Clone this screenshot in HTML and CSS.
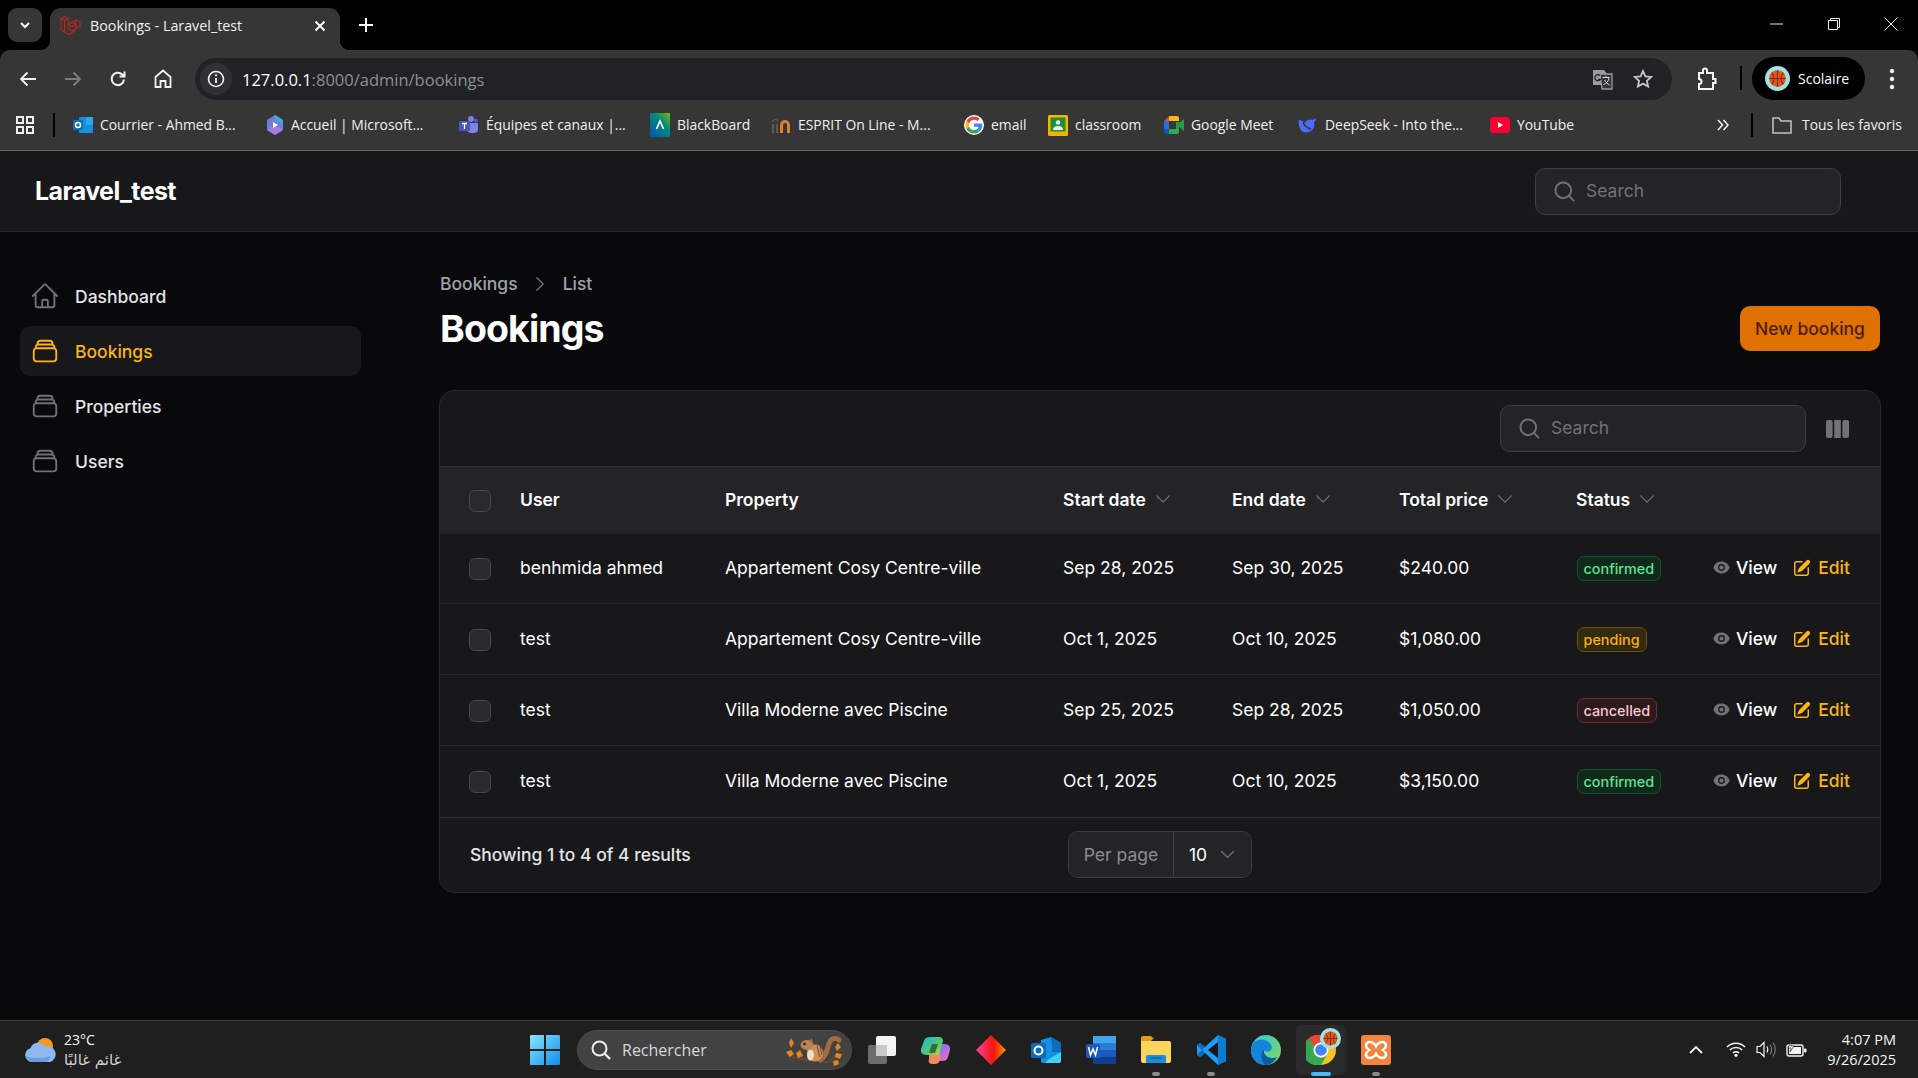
FILE: index.html
```html
<!DOCTYPE html>
<html lang="en">
<head>
    <meta charset="UTF-8">
    <meta name="viewport" content="width=device-width, initial-scale=1.0">
    <title>Bookings - Laravel_test</title>
    <link rel="stylesheet" href="styles.css">
</head>
<body>
    <svg class="sprites" width="0" height="0">
        <symbol id="i-search" viewBox="0 0 20 20"><path fill="currentColor" fill-rule="evenodd" d="M9 3.5a5.5 5.5 0 100 11 5.5 5.5 0 000-11zM2 9a7 7 0 1112.452 4.391l3.328 3.329a.75.75 0 11-1.06 1.06l-3.329-3.328A7 7 0 012 9z"/></symbol>
        <symbol id="i-stack" viewBox="0 0 24 24"><path fill="none" stroke="currentColor" stroke-width="1.5" stroke-linecap="round" stroke-linejoin="round" d="M6 6.878V6a2.25 2.25 0 012.25-2.25h7.5A2.25 2.25 0 0118 6v.878m-12 0c.235-.083.487-.128.75-.128h10.5c.263 0 .515.045.75.128m-12 0A2.25 2.25 0 004.5 9v.878m13.5-3A2.25 2.25 0 0119.5 9v.878m0 0a2.246 2.246 0 00-.75-.128H5.25c-.263 0-.515.045-.75.128m15 0A2.25 2.25 0 0121 12v6a2.25 2.25 0 01-2.25 2.25H5.25A2.25 2.25 0 013 18v-6c0-.98.626-1.813 1.5-2.122"/></symbol>
        <symbol id="i-home" viewBox="0 0 24 24"><path fill="none" stroke="currentColor" stroke-width="1.5" stroke-linecap="round" stroke-linejoin="round" d="M2.25 12l8.954-8.955c.44-.439 1.152-.439 1.591 0L21.75 12M4.5 9.75v10.125c0 .621.504 1.125 1.125 1.125H9.75v-4.875c0-.621.504-1.125 1.125-1.125h2.25c.621 0 1.125.504 1.125 1.125V21h4.125c.621 0 1.125-.504 1.125-1.125V9.75M8.25 21h8.25"/></symbol>
        <symbol id="i-chev" viewBox="0 0 24 24"><path fill="none" stroke="currentColor" stroke-width="1.5" stroke-linecap="round" stroke-linejoin="round" d="M19.5 8.25l-7.5 7.5-7.5-7.5"/></symbol>
        <symbol id="i-eye" viewBox="0 0 20 20"><path fill="currentColor" d="M10 12.5a2.5 2.5 0 100-5 2.5 2.5 0 000 5z"/><path fill="currentColor" fill-rule="evenodd" d="M.664 10.59a1.651 1.651 0 010-1.186A10.004 10.004 0 0110 3c4.257 0 7.893 2.66 9.336 6.41.147.381.146.804 0 1.186A10.004 10.004 0 0110 17c-4.257 0-7.893-2.66-9.336-6.41zM14 10a4 4 0 11-8 0 4 4 0 018 0z"/></symbol>
        <symbol id="i-edit" viewBox="0 0 20 20"><path fill="currentColor" d="M5.433 13.917l1.262-3.155A4 4 0 017.58 9.42l6.92-6.918a2.121 2.121 0 013 3l-6.92 6.918c-.383.383-.84.685-1.343.886l-3.154 1.262a.5.5 0 01-.65-.65z"/><path fill="currentColor" d="M3.5 5.75c0-.69.56-1.25 1.25-1.25H10A.75.75 0 0010 3H4.75A2.75 2.75 0 002 5.75v9.5A2.75 2.75 0 004.75 18h9.5A2.75 2.75 0 0017 15.25V10a.75.75 0 00-1.5 0v5.25c0 .69-.56 1.25-1.25 1.25h-9.5c-.69 0-1.25-.56-1.25-1.25v-9.5z"/></symbol>
        <symbol id="i-ball" viewBox="0 0 24 24"><circle cx="12" cy="12" r="12" fill="#9fe3e6"/><circle cx="12" cy="12" r="8" fill="#e2571c"/><path fill="none" stroke="#7c2a0a" stroke-width="1" d="M4 12h16M12 4v16M6.5 6.5c3 3 3 8 0 11M17.5 6.5c-3 3-3 8 0 11"/></symbol>
    </svg>

    <!-- browser window -->
    <div class="tabstrip">
        <div class="tab-list"><svg width="12" height="12" viewBox="0 0 12 12"><path d="M2 4l4 4 4-4" fill="none" stroke="#fff" stroke-width="2"/></svg></div>
        <div class="tab">
            <svg class="favicon" width="21" height="21" viewBox="0 0 21 21"><path fill="none" stroke="#b02a20" stroke-width="1.1" d="M1 3.5l3.5-2 3.5 2v10l4 2.3 4-2.3v-4l-4 2.3-4-2.3M1 3.5v11.5l7.5 4.5 7.5-4.500M4.500 5.500v11M4.500 5.500l-3.500-2M4.500 5.500l3.500-2M8 9.500l4-2.300 4 2.300M12 7.200l4-2.300 4 2.300v4l-4 2.300M16 4.900v4.600"/></svg>
            <span class="tab-title">Bookings - Laravel_test</span>
            <svg class="tab-close" width="12" height="12" viewBox="0 0 12 12"><path d="M1.500 1.500l9 9M10.500 1.500l-9 9" stroke="#fff" stroke-width="1.800"/></svg>
        </div>
        <svg class="new-tab" width="14" height="14" viewBox="0 0 14 14"><path d="M7 0v14M0 7h14" stroke="#fff" stroke-width="2"/></svg>
        <div class="window-btns">
            <svg width="14" height="14" viewBox="0 0 14 14"><path d="M0 7h13" stroke="#eee" stroke-width="1"/></svg>
            <svg width="14" height="14" viewBox="0 0 14 14"><path d="M1.500 3.500h9v9h-9zM3.500 3.500v-2h9v9h-2" fill="none" stroke="#eee" stroke-width="1"/></svg>
            <svg width="14" height="14" viewBox="0 0 14 14"><path d="M.5.500l13 13M13.500.500l-13 13" stroke="#eee" stroke-width="1"/></svg>
        </div>
    </div>

    <div class="toolbar">
        <svg class="tb-back" width="18" height="18" viewBox="0 0 18 18"><path d="M17 9H2M8.500 2.500L2 9l6.500 6.500" fill="none" stroke="#f1f1f1" stroke-width="1.800"/></svg>
        <svg class="tb-forward" width="18" height="18" viewBox="0 0 18 18"><path d="M1 9h15M9.500 2.500L16 9l-6.500 6.500" fill="none" stroke="#7d7d7d" stroke-width="1.800"/></svg>
        <svg class="tb-reload" width="18" height="18" viewBox="0 0 18 18"><path d="M15 9.500A6.200 6.200 0 1 1 13.200 4.500L15 6.300M15.500 1.500v5h-5" fill="none" stroke="#f1f1f1" stroke-width="2"/></svg>
        <svg class="tb-home" width="18" height="19" viewBox="0 0 18 19"><path d="M1.500 8L9 1.500 16.500 8v10h-5v-6h-5v6h-5z" fill="none" stroke="#f1f1f1" stroke-width="1.800"/></svg>
        <div class="omnibox">
            <div class="site-info"><svg width="18" height="18" viewBox="0 0 18 18"><circle cx="9" cy="9" r="7.500" fill="none" stroke="#f1f1f1" stroke-width="1.600"/><path d="M9 8v5" stroke="#f1f1f1" stroke-width="1.800"/><circle cx="9" cy="5.300" r="1.100" fill="#f1f1f1"/></svg></div>
            <span class="url">127.0.0.1<span class="url-dim">:8000/admin/bookings</span></span>
            <svg class="omni-translate" width="21" height="21" viewBox="0 0 21 21"><path d="M1 1h11l3 4v11H1z" fill="#9b9b9b"/><path d="M8 5h12v15H10z" fill="#363636" stroke="#9b9b9b" stroke-width="1.300"/><path d="M10.500 8.500h7M14 7v2M11.500 15.500c3-1 5-3 5.500-6.500M12.500 11c1 2 3 4 5 5" fill="none" stroke="#d6d6d6" stroke-width="1"/><path d="M8 6.500a3 3 0 1 0 .3 4H6" fill="none" stroke="#222" stroke-width="1.300"/></svg>
            <svg class="omni-star" width="20" height="20" viewBox="0 0 20 20"><path d="M10 2l2.400 5.300 5.800.6-4.300 3.900 1.200 5.700L10 14.600l-5.100 2.900 1.200-5.700-4.300-3.900 5.800-.6z" fill="none" stroke="#c7c7c7" stroke-width="1.800"/></svg>
        </div>
        <svg class="tb-ext" width="20" height="24" viewBox="0 0 20 24"><path d="M2 6h4V3.500a2 2 0 0 1 4 0V6h6v6h2.500v4H16v6H2v-5a2.500 2.500 0 0 0 0-5z" fill="none" stroke="#f5f5f5" stroke-width="2"/></svg>
        <i class="tb-sep"></i>
        <div class="profile"><svg width="25" height="25"><use href="#i-ball"/></svg><span>Scolaire</span></div>
        <svg class="tb-menu" width="6" height="22" viewBox="0 0 6 22"><circle cx="3" cy="3" r="2.200" fill="#eee"/><circle cx="3" cy="11" r="2.200" fill="#eee"/><circle cx="3" cy="19" r="2.200" fill="#eee"/></svg>
    </div>

    <div class="bookmarks">
        <svg class="bm-apps" width="18" height="18" viewBox="0 0 18 18"><path d="M1 1h6v6H1zM11 1h6v6h-6zM1 11h6v6H1zM11 11h6v6h-6z" fill="none" stroke="#eee" stroke-width="2"/></svg>
        <i class="bm-sep"></i>
        <div class="bm-list">
            <div class="bm"><svg width="20" height="18" viewBox="0 0 20 18"><rect x="6" y="1" width="14" height="16" rx="1" fill="#1490df"/><rect x="13" y="1" width="7" height="8" fill="#28a8ea"/><rect y="4" width="10" height="10" rx="1" fill="#0f6cbd"/><circle cx="5" cy="9" r="2.500" fill="none" stroke="#fff" stroke-width="1.500"/></svg><span>Courrier - Ahmed B...</span></div>
            <div class="bm"><svg width="18" height="22" viewBox="0 0 18 22"><path d="M9 1l8 5v10l-8 5-8-5V6z" fill="#6d7ed8"/><path d="M9 1l8 5v5L9 6z" fill="#3fa7e0"/><path d="M1 16l8 5 8-5-4-3H5z" fill="#a77be0"/><path d="M7 8l5 3-5 3z" fill="#fff"/></svg><span>Accueil | Microsoft...</span></div>
            <div class="bm"><svg width="20" height="20" viewBox="0 0 20 20"><circle cx="12" cy="4" r="3" fill="#7b83eb"/><circle cx="17" cy="5.500" r="2" fill="#5059c9"/><path d="M8 8h11v6a4 4 0 0 1-4 4h-3a4 4 0 0 1-4-4z" fill="#7b83eb"/><rect y="6" width="11" height="10" rx="1" fill="#4b53bc"/><path d="M3 8.500h5M5.500 8.500V14" stroke="#fff" stroke-width="1.300"/></svg><span>Équipes et canaux |...</span></div>
            <div class="bm"><svg width="20" height="24" viewBox="0 0 20 24"><defs><linearGradient id="bb" x1="1" y1="0" x2="0" y2="1"><stop offset="0" stop-color="#7ab51d"/><stop offset=".4" stop-color="#008a7c"/><stop offset="1" stop-color="#0056b3"/></linearGradient></defs><rect width="20" height="24" fill="url(#bb)"/><path d="M6.500 16L10 8l3.500 8" fill="none" stroke="#fff" stroke-width="1.700"/></svg><span>BlackBoard</span></div>
            <div class="bm"><svg width="20" height="18" viewBox="0 0 20 18"><path d="M2 17V8M6 17V8" fill="none" stroke="#5a5a5a" stroke-width="2.200"/><path d="M1 6c2-3 4-3 6-1" fill="none" stroke="#5a5a5a" stroke-width="1.500"/><path d="M10.500 17V9a3.500 3.500 0 0 1 7 0v8" fill="none" stroke="#e0802c" stroke-width="3"/></svg><span>ESPRIT On Line - M...</span></div>
            <div class="bm"><svg width="20" height="24" viewBox="-4 -4 56 56"><circle cx="24" cy="24" r="28" fill="#fff"/><path fill="#EA4335" d="M24 9.500c3.540 0 6.710 1.220 9.210 3.600l6.850-6.850C35.900 2.380 30.470 0 24 0 14.620 0 6.510 5.380 2.560 13.220l7.980 6.190C12.430 13.720 17.740 9.500 24 9.500z"/><path fill="#4285F4" d="M46.980 24.550c0-1.570-.15-3.090-.38-4.550H24v9.020h12.940c-.58 2.960-2.260 5.480-4.780 7.180l7.730 6c4.510-4.180 7.090-10.360 7.090-17.650z"/><path fill="#FBBC05" d="M10.530 28.590c-.48-1.450-.76-2.990-.76-4.590s.27-3.140.76-4.590l-7.980-6.190C.92 16.460 0 20.120 0 24c0 3.880.92 7.540 2.560 10.780l7.970-6.190z"/><path fill="#34A853" d="M24 48c6.480 0 11.930-2.130 15.890-5.810l-7.730-6c-2.150 1.450-4.920 2.300-8.160 2.300-6.260 0-11.570-4.220-13.470-9.910l-7.980 6.190C6.510 42.620 14.620 48 24 48z"/></svg><span>email</span></div>
            <div class="bm"><svg width="20" height="21" viewBox="0 0 20 21"><rect width="20" height="21" rx="1.500" fill="#f4b400"/><rect x="2.500" y="2.500" width="15" height="14" fill="#1e8e3e"/><circle cx="10" cy="7.500" r="2.200" fill="#e8f0e8"/><path d="M5 15c0-3 2-4 5-4s5 1 5 4z" fill="#e8f0e8"/></svg><span>classroom</span></div>
            <div class="bm"><svg width="20" height="18" viewBox="0 0 20 18"><path d="M5 0v5H0z" fill="#ea4335"/><path d="M5 0h8a2 2 0 0 1 2 2v3H5z" fill="#fbbc05"/><path d="M0 5h5v8H0z" fill="#1a73e8"/><path d="M0 13h5v5H2a2 2 0 0 1-2-2z" fill="#1557b0"/><path d="M5 13h10v3a2 2 0 0 1-2 2H5z" fill="#34a853"/><path d="M15 7l5-4v12l-5-4zM12 6h3v7h-3z" fill="#2a9d4a"/></svg><span>Google Meet</span></div>
            <div class="bm"><svg width="20" height="17" viewBox="0 0 20 17"><path d="M1 3c2 0 4 1 6 3 1-3 4-4 7-3 1 0 2-1 3-2l1 2-2 2c1 3 0 7-3 9-3 2-8 2-10-1C1 10 0 6 1 3z" fill="#4d6bfe"/><path d="M5 5c1 3 4 6 8 7" fill="none" stroke="#363636" stroke-width="1.500"/></svg><span>DeepSeek - Into the...</span></div>
            <div class="bm"><svg width="20" height="16" viewBox="0 0 20 16"><rect width="20" height="16" rx="4" fill="#ff0033"/><path d="M8 5l5 3-5 3z" fill="#fff"/></svg><span>YouTube</span></div>
        </div>
        <svg class="bm-more" width="12" height="12" viewBox="0 0 12 12"><path d="M1 1l4.500 5L1 11M6.500 1L11 6l-4.500 5" fill="none" stroke="#eee" stroke-width="1.600"/></svg>
        <i class="bm-sep bm-sep-right"></i>
        <div class="bm bm-folder"><svg width="20" height="17" viewBox="0 0 20 17"><path d="M1 1h6l2 3h10v12H1z" fill="none" stroke="#c4c4c4" stroke-width="1.500"/></svg><span>Tous les favoris</span></div>
    </div>

    <!-- app -->
    <header class="topbar">
        <div class="brand">Laravel_test</div>
        <div class="search-box"><svg width="25" height="25"><use href="#i-search"/></svg><span>Search</span></div>
    </header>

    <div class="layout">
        <nav class="sidebar">
            <a class="nav-item"><svg width="30" height="30"><use href="#i-home"/></svg>Dashboard</a>
            <a class="nav-item active"><svg width="30" height="30"><use href="#i-stack"/></svg>Bookings</a>
            <a class="nav-item"><svg width="30" height="30"><use href="#i-stack"/></svg>Properties</a>
            <a class="nav-item"><svg width="30" height="30"><use href="#i-stack"/></svg>Users</a>
        </nav>

        <main class="content">
            <div class="breadcrumbs">
                <span>Bookings</span>
                <svg width="20" height="20" viewBox="0 0 24 24"><path fill="none" stroke="currentColor" stroke-width="1.500" stroke-linecap="round" stroke-linejoin="round" d="M8.250 4.500l7.500 7.500-7.500 7.500"/></svg>
                <span>List</span>
            </div>
            <div class="page-head">
                <h1>Bookings</h1>
                <button class="btn-new">New booking</button>
            </div>

            <section class="card">
                <div class="card-tools">
                    <div class="search-box"><svg width="25" height="25"><use href="#i-search"/></svg><span>Search</span></div>
                    <svg class="cols-icon" width="23" height="18" viewBox="0 0 23 18"><rect width="6.600" height="18" rx="2" fill="#71717a"/><rect x="8.200" width="6.600" height="18" fill="#71717a"/><rect x="16.400" width="6.600" height="18" rx="2" fill="#71717a"/></svg>
                </div>
                <table class="bookings">
                    <colgroup>
                        <col class="c-check"><col class="c-user"><col class="c-prop"><col class="c-start"><col class="c-end"><col class="c-total"><col class="c-status"><col>
                    </colgroup>
                    <thead>
                        <tr>
                            <th class="cell-check"><i class="check"></i></th>
                            <th>User</th>
                            <th>Property</th>
                            <th><span class="sort">Start date<svg width="20" height="20"><use href="#i-chev"/></svg></span></th>
                            <th><span class="sort">End date<svg width="20" height="20"><use href="#i-chev"/></svg></span></th>
                            <th><span class="sort">Total price<svg width="20" height="20"><use href="#i-chev"/></svg></span></th>
                            <th><span class="sort">Status<svg width="20" height="20"><use href="#i-chev"/></svg></span></th>
                            <th></th>
                        </tr>
                    </thead>
                    <tbody>
                        <tr>
                            <td class="cell-check"><i class="check"></i></td>
                            <td>benhmida ahmed</td>
                            <td>Appartement Cosy Centre-ville</td>
                            <td>Sep 28, 2025</td>
                            <td>Sep 30, 2025</td>
                            <td>$240.00</td>
                            <td class="cell-badge"><span class="badge confirmed">confirmed</span></td>
                            <td class="cell-actions"><div class="actions"><a class="act-view"><svg width="17" height="17"><use href="#i-eye"/></svg>View</a><a class="act-edit"><svg width="20" height="20"><use href="#i-edit"/></svg>Edit</a></div></td>
                        </tr>
                        <tr>
                            <td class="cell-check"><i class="check"></i></td>
                            <td>test</td>
                            <td>Appartement Cosy Centre-ville</td>
                            <td>Oct 1, 2025</td>
                            <td>Oct 10, 2025</td>
                            <td>$1,080.00</td>
                            <td class="cell-badge"><span class="badge pending">pending</span></td>
                            <td class="cell-actions"><div class="actions"><a class="act-view"><svg width="17" height="17"><use href="#i-eye"/></svg>View</a><a class="act-edit"><svg width="20" height="20"><use href="#i-edit"/></svg>Edit</a></div></td>
                        </tr>
                        <tr>
                            <td class="cell-check"><i class="check"></i></td>
                            <td>test</td>
                            <td>Villa Moderne avec Piscine</td>
                            <td>Sep 25, 2025</td>
                            <td>Sep 28, 2025</td>
                            <td>$1,050.00</td>
                            <td class="cell-badge"><span class="badge cancelled">cancelled</span></td>
                            <td class="cell-actions"><div class="actions"><a class="act-view"><svg width="17" height="17"><use href="#i-eye"/></svg>View</a><a class="act-edit"><svg width="20" height="20"><use href="#i-edit"/></svg>Edit</a></div></td>
                        </tr>
                        <tr>
                            <td class="cell-check"><i class="check"></i></td>
                            <td>test</td>
                            <td>Villa Moderne avec Piscine</td>
                            <td>Oct 1, 2025</td>
                            <td>Oct 10, 2025</td>
                            <td>$3,150.00</td>
                            <td class="cell-badge"><span class="badge confirmed">confirmed</span></td>
                            <td class="cell-actions"><div class="actions"><a class="act-view"><svg width="17" height="17"><use href="#i-eye"/></svg>View</a><a class="act-edit"><svg width="20" height="20"><use href="#i-edit"/></svg>Edit</a></div></td>
                        </tr>
                    </tbody>
                </table>
                <div class="card-foot">
                    <span class="results">Showing 1 to 4 of 4 results</span>
                    <div class="per-page">
                        <span class="per-label">Per page</span>
                        <span class="per-value">10<svg width="19" height="19"><use href="#i-chev"/></svg></span>
                    </div>
                </div>
            </section>
        </main>
    </div>

    <!-- windows taskbar -->
    <footer class="taskbar">
        <div class="weather">
            <svg width="32" height="26" viewBox="0 0 32 26"><circle cx="21" cy="9" r="8" fill="#f59a1b"/><path d="M8 25a7 7 0 0 1-1.500-13.800A8 8 0 0 1 21 9.500 6 6 0 0 1 26 25z" fill="#8db7ee"/><path d="M2 19c5 3 17 3 24 0v1a5 5 0 0 1-4 5H8a6 6 0 0 1-6-6z" fill="#6f9be0"/></svg>
            <div class="weather-text"><span>23°C</span><span class="weather-ar" lang="ar">غائم غالبًا</span></div>
        </div>
        <div class="task-center">
            <svg class="win-logo" width="30" height="30" viewBox="0 0 30 30"><defs><linearGradient id="win" x1="0" y1="0" x2="1" y2="1"><stop offset="0" stop-color="#86e5ff"/><stop offset="1" stop-color="#0d8fee"/></linearGradient></defs><path fill="url(#win)" d="M0 1a1 1 0 0 1 1-1h13v14H0zM16 0h13a1 1 0 0 1 1 1v13H16zM0 16h14v14H1a1 1 0 0 1-1-1zM16 16h14v13a1 1 0 0 1-1 1H16z"/></svg>
            <div class="task-search">
                <svg width="22" height="22" viewBox="0 0 22 22"><circle cx="9.500" cy="9.500" r="7" fill="none" stroke="#eee" stroke-width="2"/><path d="M14.500 14.500L20 20" stroke="#eee" stroke-width="2.400"/></svg>
                <span>Rechercher</span>
                <svg class="squirrel" width="60" height="36" viewBox="0 0 60 36">
                    <path d="M3 24c11 2 27 7 43 6l6-8" fill="none" stroke="#6a4a2c" stroke-width="1.500"/>
                    <path d="M36 28c8-4 7-15 11-20 2-2 6-2 8 0" fill="none" stroke="#a66b3d" stroke-width="5" stroke-linecap="round"/>
                    <ellipse cx="31" cy="21" rx="8" ry="8.500" fill="#c8925e"/>
                    <ellipse cx="26.500" cy="23" rx="3.500" ry="5.500" fill="#f0dcc0"/>
                    <path d="M33 14l3 11M36 15l2 8" stroke="#6f4526" stroke-width="1"/>
                    <ellipse cx="23" cy="13" rx="6.500" ry="5" fill="#b98450"/>
                    <path d="M25 9l3-3 1 5z" fill="#a06c3c"/>
                    <circle cx="20.500" cy="12" r="1.200" fill="#1c120a"/>
                    <path d="M7 6l3 5-3 5-2-5zM2 20l5-2 3 4-4 3zM12 21l4-3 3 6-5 2zM54 11l3 4-4 4-2-4zM52 21l6 1-2 5-5-2zM49 29l5-1 1 4-5 2z" fill="#e5861c"/>
                </svg>
            </div>
            <svg class="task-view" width="30" height="30" viewBox="0 0 30 30"><rect x="1" y="10" width="19" height="19" rx="2" fill="#6d6d6d"/><rect x="9" y="1" width="20" height="20" rx="2" fill="#f3f3f3"/><rect x="9" y="10" width="11" height="11" fill="#c9c9c9"/></svg>
            <div class="task-app"><svg width="30" height="28" viewBox="0 0 30 28"><defs><linearGradient id="cp1" x1="0" y1="0" x2="1" y2="1"><stop offset="0" stop-color="#1fb6ea"/><stop offset=".6" stop-color="#52c76a"/><stop offset="1" stop-color="#d8dc3a"/></linearGradient><linearGradient id="cp2" x1="0" y1="0" x2="1" y2="1"><stop offset="0" stop-color="#3c8ef0"/><stop offset=".5" stop-color="#b36ae8"/><stop offset="1" stop-color="#f07ca8"/></linearGradient></defs><path fill="url(#cp2)" d="M19 8h5c3 0 6 3 5 6l-2 7c-1 3-3 4-6 4h-6z"/><path fill="#f08a5d" d="M8 19h12l-1 5c-1 3-3 4-5 4h-3c-3 0-4-3-3-5z"/><path fill="url(#cp1)" d="M9 1h9c3 0 4 2 4 4l-4 14H6c-4 0-7-2-6-6l3-8C4 2 6 1 9 1z"/><path fill="#1f1f1f" d="M11 8h6l-3 9H8z" opacity=".55"/></svg></div>
            <div class="task-app"><svg width="30" height="30" viewBox="0 0 30 30"><defs><linearGradient id="anydesk" x1="0" y1="0" x2="1" y2="0"><stop offset="0" stop-color="#f53fa0"/><stop offset=".6" stop-color="#f5140a"/><stop offset="1" stop-color="#fa9a00"/></linearGradient></defs><path fill="url(#anydesk)" d="M15 0l15 15-15 15L0 15z"/></svg></div>
            <div class="task-app"><svg width="30" height="26" viewBox="0 0 30 26"><path d="M10 3l10-3 10 6v17a3 3 0 0 1-3 3H12a3 3 0 0 1-2-1z" fill="#1490df"/><path d="M19 0l11 6v9h-9V5z" fill="#0f6cbd"/><path d="M14 26h14a2 2 0 0 0 2-2v-9l-12 7z" fill="#3fd0f5"/><rect y="6" width="15" height="15" rx="1.500" fill="#0f6cbd"/><circle cx="7.500" cy="13.500" r="4" fill="none" stroke="#fff" stroke-width="2"/></svg></div>
            <div class="task-app"><svg width="30" height="28" viewBox="0 0 30 28"><rect x="7" width="23" height="28" rx="1.500" fill="#2b7cd3"/><rect x="7" width="23" height="7" fill="#41a5ee"/><rect x="7" y="14" width="23" height="7" fill="#185abd"/><rect x="7" y="21" width="23" height="7" fill="#103f91"/><rect y="8" width="14" height="14" rx="1.500" fill="#185abd"/><path d="M2.500 11l2 8 2.500-6 2.500 6 2-8" fill="none" stroke="#fff" stroke-width="1.500"/></svg></div>
            <div class="task-app running"><svg width="30" height="27" viewBox="0 0 30 27"><path d="M0 2a2 2 0 0 1 2-2h8l3 3h-1l-2 2H0z" fill="#dc9e0e"/><path d="M0 5h28a2 2 0 0 1 2 2v18a2 2 0 0 1-2 2H2a2 2 0 0 1-2-2z" fill="#fcd55b"/><rect x="5" y="19" width="20" height="8" rx="1.500" fill="#1a8ddc"/><path d="M9 22h12" stroke="#0c5fa5" stroke-width="1.200"/></svg></div>
            <div class="task-app running"><svg width="30" height="30" viewBox="0 0 30 30"><path d="M22 0l8 4v22l-8 4-13-12-5 4-3-2V10l3-2 5 4z" fill="#1f9cf0"/><path d="M22 0v30l8-4V4z" fill="#0d7bd0"/><path d="M22 7L12 15l10 8z" fill="#19191c"/><path d="M1 10l3-2 5 4-3 3zM1 20l3 2 5-4-3-3z" fill="#0a6cc0"/></svg></div>
            <div class="task-app"><svg width="30" height="30" viewBox="0 0 30 30"><defs><linearGradient id="edge" x1="0" y1="0" x2="1" y2="1"><stop offset="0" stop-color="#37c6d0"/><stop offset="1" stop-color="#7fdc5e"/></linearGradient></defs><circle cx="15" cy="15" r="15" fill="url(#edge)"/><path d="M0 15C0 6 8 3 14 5c6 2 8 7 6 10-2 2-6 2-7 0-1 3 2 8 8 8 2 0 3 0 5-1-3 5-7 8-12 8C6 30 0 24 0 15z" fill="#1384d8"/><path d="M13 15c-1 3 2 8 8 8 2 0 3 0 5-1-3 5-7 8-12 8-4-4-5-13-1-15z" fill="#0c59a4"/></svg></div>
            <div class="task-app chrome">
                <svg width="30" height="30" viewBox="0 0 30 30"><circle cx="15" cy="15" r="15" fill="#f7c325"/><path d="M15 0a15 15 0 0 1 13 7.500H15A7.500 7.500 0 0 0 8.500 11.200L2 3.800A15 15 0 0 1 15 0z" fill="#e8453c"/><path d="M2 3.800A15 15 0 0 0 15 30l6.500-11.200A7.500 7.500 0 0 1 8.500 11.200z" fill="#35a853"/><circle cx="15" cy="15" r="7.500" fill="#fff"/><circle cx="15" cy="15" r="5.800" fill="#4285f4"/></svg>
                <svg class="chrome-badge" width="21" height="21"><use href="#i-ball"/></svg>
            </div>
            <div class="task-app running"><svg width="30" height="30" viewBox="0 0 30 30"><rect width="30" height="30" rx="3" fill="#f4833c"/><path d="M15 11c-2-4-7-5-9-3-2 2-1 5 2 7-3 2-4 5-2 7 2 2 7 1 9-3 2 4 7 5 9 3 2-2 1-5-2-7 3-2 4-5 2-7-2-2-7-1-9 3z" fill="none" stroke="#fff" stroke-width="2.600"/></svg></div>
        </div>
        <div class="tray">
            <svg class="tray-chev" width="14" height="9" viewBox="0 0 14 9"><path d="M1 8l6-6 6 6" fill="none" stroke="#f3f3f3" stroke-width="1.800"/></svg>
            <svg width="20" height="15" viewBox="0 0 20 15"><path d="M1 5c5-5 13-5 18 0M3.800 8c3.500-3.300 9-3.300 12.400 0M6.800 11c2-1.600 4.400-1.600 6.400 0" fill="none" stroke="#f3f3f3" stroke-width="1.400"/><circle cx="10" cy="13.300" r="1.600" fill="#f3f3f3"/></svg>
            <svg width="20" height="17" viewBox="0 0 20 17"><path d="M1 5.500h3l4-4v14l-4-4H1z" fill="none" stroke="#f3f3f3" stroke-width="1.200"/><path d="M11 5.500c1 1.500 1 4.500 0 6" fill="none" stroke="#f3f3f3" stroke-width="1.200"/><path d="M14 3.500c2 3 2 7 0 10M17 1.500c3 4 3 10 0 14" fill="none" stroke="#777" stroke-width="1.200"/></svg>
            <svg width="21" height="15" viewBox="0 0 21 15"><rect x="1" y="3" width="16" height="11" rx="2" fill="none" stroke="#f3f3f3" stroke-width="1.400"/><rect x="3" y="5" width="12" height="7" fill="#f3f3f3"/><rect x="18" y="6.500" width="2.500" height="4" rx="1" fill="#f3f3f3"/><path d="M5 0L2 6h3l-1 4 4-6H5z" fill="#f3f3f3" stroke="#1f1f1f" stroke-width=".6"/></svg>
            <div class="clock"><span>4:07 PM</span><span>9/26/2025</span></div>
        </div>
    </footer>
</body>
</html>
```

FILE: styles.css
```css
* {
    box-sizing: border-box;
}
html, body {
    height: 100%;
}
body {
    margin: 0;
    height: 1078px;
    overflow: hidden;
    display: flex;
    flex-direction: column;
    background-color: #09090b;
    color: #fff;
    font-family: Inter, "Liberation Sans", sans-serif;
    font-size: 17.5px;
}
.sprites {
    position: absolute;
}
svg {
    flex: none;
    display: block;
}
a {
    color: inherit;
}

/* browser chrome */
.tabstrip {
    height: 50px;
    flex: none;
    display: flex;
    align-items: flex-start;
    background: #000;
    font-family: "Open Sans", sans-serif;
}
.tab-list {
    width: 34px;
    height: 34px;
    margin: 8px 0 0 8px;
    border-radius: 9px;
    background: #363636;
    display: flex;
    align-items: center;
    justify-content: center;
}
.tab {
    position: relative;
    width: 290px;
    height: 42px;
    margin: 8px 0 0 8px;
    padding: 0 14px 7px 10px;
    background: #363636;
    border-radius: 11px 11px 0 0;
    display: flex;
    align-items: center;
    font-size: 14.3px;
    color: #f0f0f0;
}
.tab::before, .tab::after {
    content: "";
    position: absolute;
    bottom: 0;
    width: 10px;
    height: 10px;
}
.tab::before {
    left: -10px;
    background: radial-gradient(circle at 0 0, #000 10px, #363636 10.5px);
}
.tab::after {
    right: -10px;
    background: radial-gradient(circle at 100% 0, #000 10px, #363636 10.5px);
}
.tab-title {
    margin-left: 9px;
    flex: 1;
    white-space: nowrap;
}
.new-tab {
    margin: 18px 0 0 19px;
}
.window-btns {
    margin-left: auto;
    margin-top: 17px;
    padding-right: 20px;
    display: flex;
    gap: 43px;
}
.toolbar {
    height: 50px;
    flex: none;
    display: flex;
    align-items: flex-end;
    background: #363636;
    border-radius: 10px 10px 0 0;
    padding-left: 19px;
}
.tb-back, .tb-forward, .tb-reload, .tb-home {
    margin-bottom: 12px;
    margin-right: 27px;
}
.tb-home {
    margin-right: 23px;
}
.omnibox {
    width: 1477px;
    height: 42px;
    background: #212226;
    border-radius: 21px;
    display: flex;
    align-items: center;
    padding-left: 5px;
    font-family: "Open Sans", sans-serif;
    font-size: 16.5px;
}
.site-info {
    width: 32px;
    height: 32px;
    border-radius: 50%;
    background: #303135;
    display: flex;
    align-items: center;
    justify-content: center;
}
.url {
    margin-left: 10px;
    flex: 1;
}
.url-dim {
    color: #8f8f8f;
}
.omni-translate {
    margin-right: 20px;
}
.omni-star {
    margin-right: 19px;
}
.tb-ext {
    margin: 0 23px 9px 25px;
}
.tb-sep, .bm-sep {
    width: 2px;
    height: 24px;
    background: #000;
}
.tb-sep {
    margin-bottom: 10px;
}
.profile {
    width: 113px;
    height: 43px;
    margin-left: 10px;
    background: #000;
    border-radius: 22px;
    display: flex;
    align-items: center;
    gap: 8px;
    padding-left: 13px;
    font-family: "Open Sans", sans-serif;
    font-size: 14px;
}
.tb-menu {
    margin: 0 0 10px 24px;
}
.bookmarks {
    height: 51px;
    flex: none;
    display: flex;
    align-items: center;
    background: #363636;
    border-bottom: 1px solid #6a6a6a;
    padding-left: 16px;
    font-family: "Open Sans", sans-serif;
    font-size: 13.9px;
    color: #f0f0f0;
}
.bookmarks span {
    padding-bottom: 2px;
}
.bm-sep {
    margin-left: 19px;
}
.bm-list {
    display: grid;
    grid-template-columns: 193px 193px 191px 121px 193px 84px 116px 134px 192px 100px;
    margin-left: 18px;
}
.bm {
    display: flex;
    align-items: center;
    gap: 7px;
    white-space: nowrap;
}
.bm-more {
    margin-left: 127px;
}
.bm-sep-right {
    margin-left: 22px;
}
.bm-folder {
    margin-left: 19px;
    gap: 10px;
}

/* app topbar */
.topbar {
    height: 81px;
    flex: none;
    display: flex;
    align-items: center;
    justify-content: space-between;
    padding: 0 77px 0 35px;
    background: #18181b;
    border-bottom: 1px solid #27272a;
}
.brand {
    font-size: 25px;
    font-weight: 700;
    letter-spacing: -0.6px;
}
.search-box {
    width: 306px;
    height: 47px;
    display: flex;
    align-items: center;
    gap: 9px;
    padding-left: 16px;
    background: #242427;
    border: 1px solid #3f3f43;
    border-radius: 10px;
    color: #71717a;
}
.search-box span {
    padding-bottom: 2px;
}

/* sidebar */
.layout {
    flex: 1;
    display: flex;
    min-height: 0;
}
.sidebar {
    width: 439px;
    flex: none;
    padding: 39px 78px 0 20px;
    display: flex;
    flex-direction: column;
    gap: 5px;
}
.nav-item {
    height: 50px;
    display: flex;
    align-items: center;
    gap: 15px;
    padding-left: 10px;
    border-radius: 10px;
    font-weight: 500;
    color: #e4e4e7;
}
.nav-item svg {
    color: #71717a;
}
.nav-item.active {
    background: #18181b;
    color: #fbb515;
}
.nav-item.active svg {
    color: #fbb515;
}

/* main */
.content {
    flex: 1;
    padding: 39px 38px 0 0;
}
.breadcrumbs {
    height: 25px;
    display: flex;
    align-items: center;
    gap: 12.5px;
    padding-left: 1px;
    font-weight: 500;
    color: #9ca3af;
}
.breadcrumbs svg {
    color: #71717a;
}
.page-head {
    margin-top: 10px;
    height: 45px;
    padding-left: 1px;
    display: flex;
    align-items: center;
    justify-content: space-between;
}
h1 {
    margin: 0;
    font-size: 37.5px;
    font-weight: 700;
    letter-spacing: -0.9px;
    line-height: 45px;
}
.btn-new {
    width: 140px;
    height: 45px;
    border: 0;
    border-radius: 10px;
    background: #e07000;
    color: #4a1e04;
    font-family: inherit;
    font-size: 17.5px;
    font-weight: 500;
}

/* table card */
.card {
    margin-top: 39px;
    margin-right: -1px;
    background: #18181b;
    border: 1px solid #27272a;
    border-radius: 15px;
    overflow: hidden;
}
.card-tools {
    height: 75px;
    display: flex;
    align-items: center;
    justify-content: flex-end;
    gap: 20px;
    padding-right: 31px;
}
.bookings {
    width: 100%;
    table-layout: fixed;
    border-collapse: collapse;
}
.c-check { width: 68px; }
.c-user { width: 205px; }
.c-prop { width: 338px; }
.c-start { width: 169px; }
.c-end { width: 167px; }
.c-total { width: 177px; }
.c-status { width: 136px; }
.bookings th {
    height: 67px;
    padding: 0 12px 2px;
    background: #242427;
    border-top: 1px solid #2f2f33;
    text-align: left;
    font-weight: 600;
}
.bookings td {
    height: 71px;
    padding: 0 12px 2px;
    border-top: 1px solid #27272a;
    white-space: nowrap;
}
.bookings tbody tr:first-child td {
    border-top: 0;
    height: 70px;
}
.bookings .cell-check {
    padding: 2px 0 0 29px;
}
.bookings .cell-badge {
    padding: 1px 12px 0 12.5px;
}
.bookings .cell-actions {
    padding-bottom: 1px;
}
.check {
    display: block;
    width: 22px;
    height: 22px;
    background: #2a2a2d;
    border: 1px solid #47474b;
    border-radius: 6px;
}
.sort {
    display: inline-flex;
    align-items: center;
    gap: 7px;
}
.sort svg {
    color: #71717a;
}
.badge {
    display: inline-block;
    height: 25px;
    padding: 0 6px;
    border: 1px solid;
    border-radius: 7px;
    font-size: 14.4px;
    font-weight: 500;
    line-height: 23px;
    vertical-align: middle;
}
.confirmed {
    color: #5fe394;
    background: #10291b;
    border-color: #14532d;
}
.pending {
    color: #f9b208;
    background: #33290f;
    border-color: #6b5212;
}
.cancelled {
    color: #fbc8cc;
    background: #2e1a1e;
    border-color: #6b2c30;
}
.actions {
    display: flex;
    justify-content: flex-end;
    align-items: center;
    gap: 15px;
    padding-right: 18px;
    font-weight: 500;
}
.actions a {
    display: flex;
    align-items: center;
    gap: 6px;
}
.act-view svg {
    color: #71717a;
}
.act-edit {
    color: #fbb515;
}
.card-foot {
    height: 75px;
    display: grid;
    grid-template-columns: 1fr auto 1fr;
    align-items: center;
    padding: 0 30px;
    border-top: 1px solid #2f2f33;
}
.results {
    font-weight: 500;
    color: #e4e4e7;
}
.per-page {
    width: 184px;
    height: 47px;
    display: flex;
    align-items: center;
    background: #18181b;
    border: 1px solid #3f3f43;
    border-radius: 10px;
    overflow: hidden;
}
.per-label {
    width: 105px;
    height: 100%;
    display: flex;
    align-items: center;
    justify-content: center;
    background: #242427;
    color: #8b8b94;
    border-right: 1px solid #3f3f43;
}
.per-value {
    flex: 1;
    display: flex;
    align-items: center;
    gap: 11px;
    padding-left: 15px;
    background: #242427;
    height: 100%;
}
.per-value svg {
    color: #71717a;
}

/* taskbar */
.taskbar {
    height: 58px;
    flex: none;
    display: flex;
    align-items: center;
    background: #1f1f1f;
    border-top: 1px solid #3c3c3c;
    font-family: "Open Sans", sans-serif;
    font-size: 13px;
    color: #f3f3f3;
}
.weather {
    width: 530px;
    display: flex;
    align-items: center;
    gap: 8px;
    padding-left: 24px;
}
.weather-text {
    display: flex;
    flex-direction: column;
    align-items: flex-start;
    line-height: 20px;
    font-size: 14px;
}
.weather-ar {
    font-family: "DejaVu Sans", sans-serif;
    font-size: 15px;
    color: #d0d0d0;
}
.task-center {
    display: flex;
    align-items: center;
}
.task-search {
    width: 275px;
    height: 40px;
    margin-left: 17px;
    padding: 0 7px 0 12px;
    border-radius: 20px;
    background: #424242;
    border: 1px solid #4c4c4c;
    display: flex;
    align-items: center;
    gap: 10px;
    font-size: 16px;
    color: #d8d8d8;
}
.task-search span {
    flex: 1;
}
.task-view {
    margin: 0 0 0 15px;
}
.task-app {
    position: relative;
    width: 55px;
    height: 50px;
    display: flex;
    align-items: center;
    justify-content: center;
}
.task-view + .task-app {
    margin-left: 11px;
}
.running::after, .chrome::after {
    content: "";
    position: absolute;
    left: 50%;
    bottom: -1px;
    width: 8px;
    height: 4px;
    margin-left: -4px;
    border-radius: 2px;
    background: #8a8a8a;
}
.chrome {
    background: #2b2b2b;
    border-radius: 6px;
    box-shadow: 2px 0 0 #262626;
    width: 49px;
    margin: 0 3px;
}
.chrome::after {
    width: 20px;
    margin-left: -10px;
    background: #47b9f5;
}
.chrome-badge {
    position: absolute;
    top: 3px;
    right: 4px;
}
.tray {
    flex: 1;
    display: flex;
    align-items: center;
    justify-content: flex-end;
    gap: 10px;
    padding-right: 22px;
}
.tray-chev {
    margin-right: 13px;
}
.clock {
    margin-left: 10px;
    display: flex;
    flex-direction: column;
    align-items: flex-end;
    line-height: 20px;
    font-size: 14.5px;
}
```
